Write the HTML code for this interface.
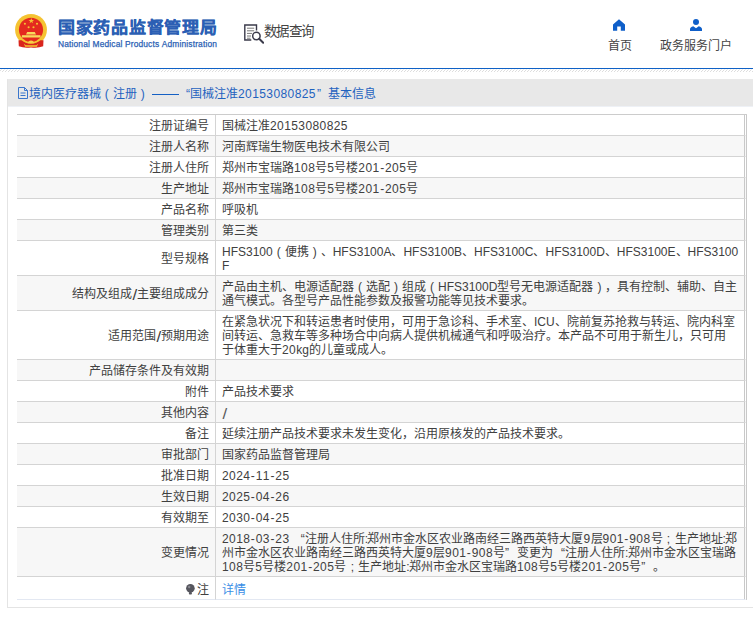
<!DOCTYPE html>
<html lang="zh-CN">
<head>
<meta charset="utf-8">
<title>国家药品监督管理局 数据查询</title>
<style>
*{box-sizing:border-box;margin:0;padding:0}
html,body{width:753px;height:617px;overflow:hidden;background:#fff}
body{font-family:"Liberation Sans",sans-serif;font-size:12px;color:#333;position:relative;text-spacing-trim:space-all;font-kerning:none}
.hdr{position:absolute;left:0;top:0;width:753px;height:68px}
.emblem{position:absolute;left:14px;top:13px;width:34px;height:36px}
.t1{position:absolute;left:58px;top:17px;font-size:16.5px;font-weight:bold;color:#2b5fb4;letter-spacing:0.22px;line-height:22px;white-space:nowrap;transform:scale(1.03,0.95);transform-origin:0 0;-webkit-text-stroke:0.25px #2b5fb4}
.t2{position:absolute;left:58px;top:39px;font-size:8.4px;color:#2b5fb4;line-height:10px;white-space:nowrap;letter-spacing:0.16px;-webkit-text-stroke:0.25px #2b5fb4}
.q{position:absolute;left:263.5px;top:23px;font-size:13.5px;color:#444;line-height:18px;white-space:nowrap;letter-spacing:-0.4px}
.qi{position:absolute;left:244px;top:24px;width:20px;height:20px}
.nav{position:absolute;top:37px;font-size:12px;line-height:16px;color:#444;white-space:nowrap}
.ni{position:absolute}
.bl{position:absolute;left:0;top:68px;width:753px;height:1px;background:#0f61c6}
.hatch{position:absolute;left:0;top:69px;width:753px;height:3px}
.panel{position:absolute;left:7px;top:79px;width:760px;height:529px;border:1px solid #e4e4e4;border-top:none;background:#fff}
.ptitle{position:absolute;left:0;top:0;width:760px;height:28px;border-bottom:1px solid #eef1f6;background:#e8e8e8;color:#1f62bf;font-size:12px;line-height:14px;white-space:nowrap}
.ptitle svg{position:absolute;left:10px;top:8px}
.ptitle span{position:absolute;top:8px}
table{position:absolute;left:9px;top:35px;width:730px;border-collapse:separate;border-spacing:0;table-layout:fixed;border-top:1px solid #ccc}
td{border-bottom:1px solid #d4d4d4;padding:4px 6px 2px 6px;line-height:14px;font-size:12px;vertical-align:middle;color:#404040;white-space:nowrap}
td.k{width:199px;text-align:right;border-right:1px solid #d4d4d4}
td.v{width:531px;border-right:3px double #c8c8c8;padding-left:6px;padding-right:0}
tr.g td{background:#f7f7f7}
tr.last td{border-bottom:1px solid #e3e8f2;padding-top:6px;padding-bottom:2px}
a{color:#3a8ee6;text-decoration:none}
.p{display:inline-block;width:12px;text-align:center}
.ql{display:inline-block;width:12px;text-align:right}
.qr{display:inline-block;width:12px;text-align:left}
.d{letter-spacing:0.41px}
.h{display:inline-block;width:5px;margin-right:0.41px;text-align:center;letter-spacing:0}
.bulb{display:inline-block;width:9px;height:11px;margin-right:2px;vertical-align:-0.5px}
.c{letter-spacing:-0.7px}
td.v .sl{color:#5a5a5a}
.sl{display:inline-block;width:5.4px;text-align:left;transform:translate(0.6px,0.8px) scale(1.4,1.2);transform-origin:0 50%}
</style>
</head>
<body>
<div class="hdr">
<svg class="emblem" viewBox="0 0 34 36">
<circle cx="17" cy="16.8" r="15.9" fill="#f5c332"/>
<path d="M4.5 27.2 L4.8 33.3 Q10 35.3 17 34.4 Q24 35.3 29.2 33.3 L29.5 27.2 Z" fill="#d9251d"/>
<circle cx="17" cy="16.8" r="13" fill="none" stroke="#f5c332" stroke-width="1.8"/>
<circle cx="17" cy="16.8" r="12.1" fill="#e42a1f"/>
<path d="M14 30.2 a3 2.6 0 0 1 6 0z" fill="#f7cf4a"/>
<path d="M9.8 30.8 l1.4 2.9 h11.6 l1.4-2.9 l-2 1.5 h-10.4z" fill="#f5c332"/>
<path d="M12 21.6 l1.2-2.7 h7.6 l1.2 2.7z" fill="#f8da5c"/>
<rect x="7.9" y="22.2" width="18.6" height="2.3" fill="#f8da5c"/>
<polygon points="17.3,4.9 18,6.9 20.1,6.9 18.4,8.2 19,10.2 17.3,9 15.6,10.2 16.2,8.2 14.5,6.9 16.6,6.9" fill="#f5c332"/>
<circle cx="10.9" cy="10.7" r="1.05" fill="#f5c332"/><circle cx="23" cy="10.7" r="1.05" fill="#f5c332"/>
<circle cx="14.6" cy="14.2" r="1.05" fill="#f5c332"/><circle cx="19.5" cy="14.2" r="1.05" fill="#f5c332"/>
</svg>
<div class="t1">国家药品监督管理局</div>
<div class="t2">National Medical Products Administration</div>
<svg class="qi" viewBox="0 0 20 20" fill="none" stroke="#3a3a4a" stroke-width="1.4">
<path d="M12.5 6.5V1H0.8v15h6.5"/>
<path d="M3 4.2h7.2M3 6.8h7.2M3 9.4h5M3 12h4M3 14.2h3.5" stroke-width="1" stroke="#777"/>
<circle cx="12.4" cy="12" r="3.7" stroke-width="1.5" fill="#fff"/>
<path d="M15.2 14.8l4 3.9" stroke-width="2" stroke-linecap="round"/>
</svg>
<div class="q">数据查询</div>
<svg class="ni" style="left:613px;top:19px" width="12" height="12" viewBox="0 0 12 12"><path d="M6 0.3 L0 5.5 V11.7 H4.2 V7.6 H7.8 V11.7 H12 V5.5 Z" fill="#0f5fc9"/></svg>
<div class="nav" style="left:607.5px;top:37.5px">首页</div>
<svg class="ni" style="left:690px;top:19px" width="12" height="12" viewBox="0 0 12 12"><circle cx="6" cy="3.1" r="3" fill="#0f5fc9"/><path d="M0 12 V10.2 Q0 8.2 3.3 7.2 L6 9.2 L8.7 7.2 Q12 8.2 12 10.2 V12Z" fill="#0f5fc9"/></svg>
<div class="nav" style="left:660px;top:37.5px">政务服务门户</div>
</div>
<div class="bl"></div>
<svg class="hatch" width="753" height="3" shape-rendering="crispEdges"><defs><pattern id="hp" width="3" height="3" patternUnits="userSpaceOnUse"><rect x="1" y="0" width="1" height="1" fill="#f0f0f0"/><rect x="0" y="1" width="1" height="1" fill="#dedede"/><rect x="2" y="2" width="1" height="1" fill="#dedede"/></pattern></defs><rect width="753" height="3" fill="url(#hp)"/></svg>
<div class="panel">
<div class="ptitle"><svg width="10" height="12" viewBox="0 0 10 12" fill="none" stroke="#3a76cc" stroke-width="1"><path d="M0.5 0.5h6l3 3v8h-9z"/><path d="M6.5 0.5v3h3M2.5 6h5M2.5 8.5h5"/></svg><span style="left:20.8px">境内医疗器械</span><span style="left:92.8px;width:12px;text-align:center">(</span><span style="left:104.8px">注册</span><span style="left:128.8px;width:12px;text-align:center">)</span><span style="left:144.4px;top:15px;width:26.6px;height:1px;background:#1560c4"></span><span style="left:170px;width:12px;text-align:right">“</span><span style="left:182px">国械注准<span class="d" style="position:static">20153080825</span></span><span style="left:309px">”</span><span style="left:320px">基本信息</span></div>
<table>
<tr><td class="k">注册证编号</td><td class="v">国械注准<span class="d">20153080825</span></td></tr>
<tr class="g"><td class="k">注册人名称</td><td class="v">河南辉瑞生物医电技术有限公司</td></tr>
<tr><td class="k">注册人住所</td><td class="v">郑州市宝瑞路<span class="d">108</span>号<span class="d">5</span>号楼<span class="d">201<span class="h">-</span>205</span>号</td></tr>
<tr class="g"><td class="k">生产地址</td><td class="v">郑州市宝瑞路<span class="d">108</span>号<span class="d">5</span>号楼<span class="d">201<span class="h">-</span>205</span>号</td></tr>
<tr><td class="k">产品名称</td><td class="v">呼吸机</td></tr>
<tr class="g"><td class="k">管理类别</td><td class="v">第三类</td></tr>
<tr><td class="k">型号规格</td><td class="v">HFS3100<span class="p">(</span>便携<span class="p">)</span>、HFS3100A、HFS3100B、HFS3100C、HFS3100D、HFS3100E、HFS3100<br>F</td></tr>
<tr class="g"><td class="k">结构及组成<span class="sl">/</span>主要组成成分</td><td class="v">产品由主机、电源适配器<span class="p">(</span>选配<span class="p">)</span>组成<span class="p">(</span>HFS3100D型号无电源适配器<span class="p">)</span>，具有控制、辅助、自主<br>通气模式。各型号产品性能参数及报警功能等见技术要求。</td></tr>
<tr><td class="k">适用范围<span class="sl">/</span>预期用途</td><td class="v">在紧急状况下和转运患者时使用，可用于急诊科、手术室、ICU、院前复苏抢救与转运、院内科室<br>间转运、急救车等多种场合中向病人提供机械通气和呼吸治疗。本产品不可用于新生儿，只可用<br>于体重大于<span class="d">20</span>kg的儿童或成人。</td></tr>
<tr class="g"><td class="k">产品储存条件及有效期</td><td class="v"></td></tr>
<tr><td class="k">附件</td><td class="v">产品技术要求</td></tr>
<tr class="g"><td class="k">其他内容</td><td class="v"><span class="sl">/</span></td></tr>
<tr><td class="k">备注</td><td class="v">延续注册产品技术要求未发生变化，沿用原核发的产品技术要求。</td></tr>
<tr class="g"><td class="k">审批部门</td><td class="v">国家药品监督管理局</td></tr>
<tr><td class="k">批准日期</td><td class="v"><span class="d">2024<span class="h">-</span>11<span class="h">-</span>25</span></td></tr>
<tr class="g"><td class="k">生效日期</td><td class="v"><span class="d">2025<span class="h">-</span>04<span class="h">-</span>26</span></td></tr>
<tr><td class="k">有效期至</td><td class="v"><span class="d">2030<span class="h">-</span>04<span class="h">-</span>25</span></td></tr>
<tr class="g"><td class="k">变更情况</td><td class="v"><span class="d">2018<span class="h">-</span>03<span class="h">-</span>23</span> <span class="ql">“</span>注册人住所<span class="c">:</span>郑州市金水区农业路南经三路西英特大厦<span class="d">9</span>层<span class="d">901<span class="h">-</span>908</span>号<span class="p">;</span>生产地址<span class="c">:</span>郑<br>州市金水区农业路南经三路西英特大厦<span class="d">9</span>层<span class="d">901<span class="h">-</span>908</span>号<span class="qr">”</span>变更为<span class="ql">“</span>注册人住所<span class="c">:</span>郑州市金水区宝瑞路<br><span class="d">108</span>号<span class="d">5</span>号楼<span class="d">201<span class="h">-</span>205</span>号<span class="p">;</span>生产地址<span class="c">:</span>郑州市金水区宝瑞路<span class="d">108</span>号<span class="d">5</span>号楼<span class="d">201<span class="h">-</span>205</span>号<span class="qr">”</span>。</td></tr>
<tr class="last"><td class="k"><svg class="bulb" viewBox="0 0 9 11"><circle cx="4.4" cy="4.3" r="4.3" fill="#56565e"/><rect x="2.9" y="8" width="3" height="2.6" rx="0.8" fill="#56565e"/><circle cx="3.2" cy="3" r="1.2" fill="#8a8a92"/></svg>注</td><td class="v"><a>详情</a></td></tr>
</table>
</div>
</body>
</html>
